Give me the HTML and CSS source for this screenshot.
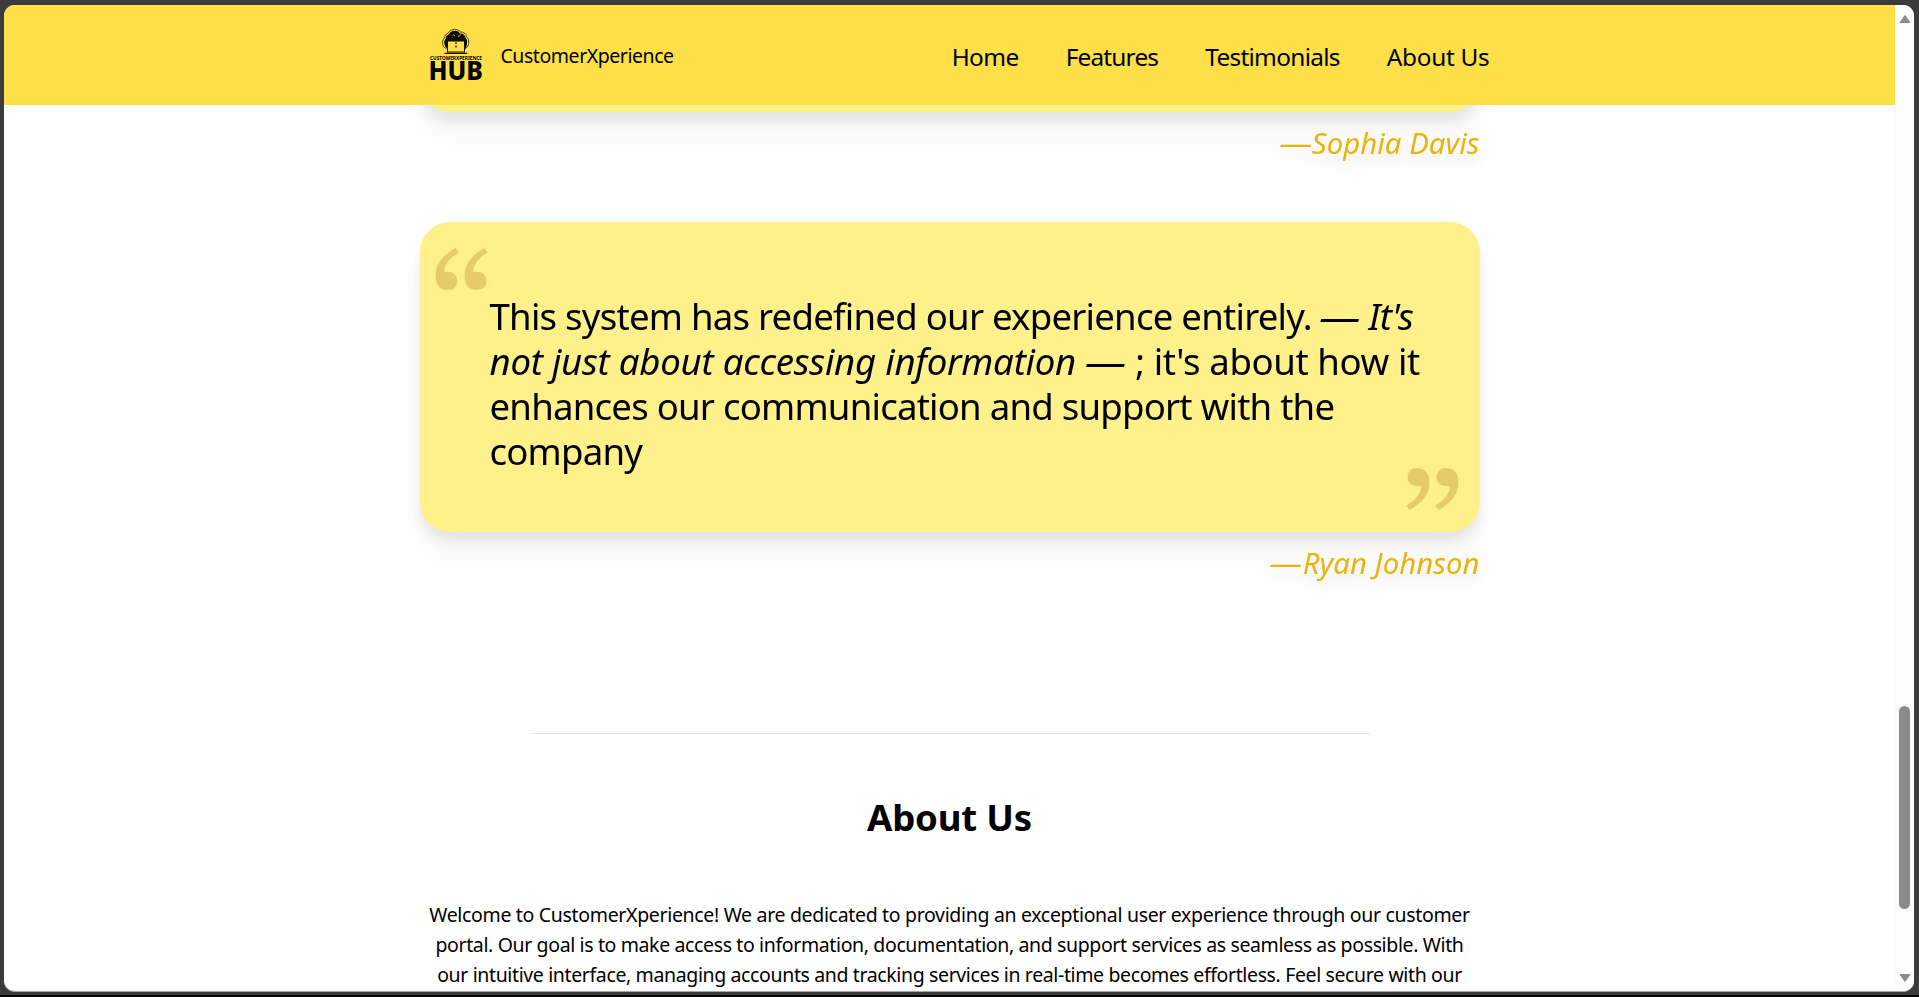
FILE: index.html
```html
<!DOCTYPE html>
<html lang="en">
<head>
<meta charset="utf-8">
<title>CustomerXperience</title>
<link rel="stylesheet" href="styles.css">
</head>
<body>
<div class="window">
  <div class="page">
    <header class="header">
      <div class="header-inner">
        <div class="brand">
          <svg class="logo" width="52" height="52" viewBox="0 0 52 52">
            <path d="M16.500 19.800A6.500 6.500 0 0 1 14 9.500Q14.500 5.500 18 4Q20.500 .3 24.500 .3Q28.500 .4 30.700 3Q35.500 3 36.500 7.500Q39.500 10 38.800 14.500Q38 18.500 35 19.800" fill="none" stroke="#2a2508" stroke-width=".8"/>
            <path d="M17 19.500Q12 14 15.500 10Q15.500 6.500 19 5Q21 1.600 25 1.700Q28.800 2 29.900 4.500Q34.500 4.200 35.500 8.600Q39 13 35.500 19.500Z" fill="#0b0900"/>
            <path d="M22.500 6.200Q24 5.200 25 7M28 7.500Q30 7.500 30.500 5.500" fill="none" stroke="#fde047" stroke-width=".8"/>
            <rect x="17.500" y="12" width="17" height="11" fill="#fde047" stroke="#141003" stroke-width="1"/>
            <path d="M26 13.200v1.700M26 16.500v2" stroke="#141003" stroke-width="1.300"/>
            <path d="M14.700 24.400H37.300" stroke="#141003" stroke-width="1.300"/>
            <text class="logo-small" x="0" y="30.600" textLength="52" lengthAdjust="spacingAndGlyphs">CUSTOMERXPERIENCE</text>
            <text class="logo-hub" x="-1.500" y="50.800" textLength="54.500" lengthAdjust="spacingAndGlyphs">HUB</text>
          </svg>
          <span class="brand-name">CustomerXperience</span>
        </div>
        <nav class="nav">
          <a class="home">Home</a>
          <a class="features">Features</a>
          <a class="testimonials">Testimonials</a>
          <a class="about-link">About Us</a>
        </nav>
      </div>
    </header>
    <main class="main">
      <figure class="quote quote-first">
        <blockquote class="card"></blockquote>
        <figcaption class="cite"><span class="dash">—</span>Sophia Davis</figcaption>
      </figure>
      <figure class="quote">
        <blockquote class="card">
          <svg class="mark mark-open" width="53" height="42" viewBox="0 0 53 42"><path id="q" d="M20.500 0L23.700 4.500Q9.500 12.500 8.800 24Q22 22.500 22.500 33Q22 42 12.500 42Q.8 42 .6 27Q.4 11.500 20.500 0Z"/><use href="#q" x="29"/></svg>
          <span class="line l1">This system has redefined our experience entirely. <em><span class="dash">—</span> It's</em></span>
          <span class="line l2"><em>not just about accessing information <span class="dash">—</span></em> ; it's about how it</span>
          <span class="line l3">enhances our communication and support with the</span>
          <span class="line l4">company</span>
          <svg class="mark mark-close" width="53" height="42" viewBox="0 0 53 42"><use href="#q"/><use href="#q" x="29"/></svg>
        </blockquote>
        <figcaption class="cite"><span class="dash">—</span>Ryan Johnson</figcaption>
      </figure>
      <hr class="rule">
      <section class="about">
        <h2 class="title">About Us</h2>
        <p class="copy">
          <span class="line p1">Welcome to CustomerXperience! We are dedicated to providing an exceptional user experience through our customer</span>
          <span class="line p2">portal. Our goal is to make access to information, documentation, and support services as seamless as possible. With</span>
          <span class="line p3">our intuitive interface, managing accounts and tracking services in real-time becomes effortless. Feel secure with our</span>
        </p>
      </section>
    </main>
  </div>
  <div class="scrollbar">
    <svg width="12" height="10" viewBox="0 0 12 10"><path d="M6 1.500L11 8.500H1Z" fill="#8b8b8b" stroke="#8b8b8b" stroke-linejoin="round"/></svg>
    <div class="thumb"></div>
    <svg width="12" height="10" viewBox="0 0 12 10"><path d="M6 8.500L11 1.500H1Z" fill="#8b8b8b" stroke="#8b8b8b" stroke-linejoin="round"/></svg>
  </div>
</div>
</body>
</html>
```
FILE: styles.css
```css
* { box-sizing: border-box; }
html { height: 100%; overflow: hidden; }
body {
  margin: 0;
  height: 997px;
  padding: 5px 5px 4px 4px;
  background: #3b3b3b;
  border-bottom: 2px solid #000;
  overflow: hidden;
  font-family: "Noto Sans", "Segoe UI", sans-serif;
  color: #000;
}
.window {
  display: flex;
  height: 987px;
  border-radius: 11px;
  overflow: hidden;
  background: #fff;
  border-bottom: 1px solid #a3a8a6;
}
.page { flex: 1; overflow: hidden; }
.header {
  position: relative;
  z-index: 2;
  height: 100px;
  background: #fde047;
}
.header-inner {
  width: 1060px;
  height: 100%;
  margin: 0 auto;
  padding-left: 10px;
  display: flex;
  align-items: center;
  justify-content: space-between;
}
.brand { display: flex; align-items: center; gap: 18px; }
.logo { overflow: visible; }
.logo-small { font-size: 4.8px; font-weight: 700; }
.logo-hub { font-size: 26px; font-weight: 800; }
.brand-name { padding: 2px 0 0 1px; font-size: 19.5px; line-height: 30px; letter-spacing: -.45px; }
.nav {
  display: flex;
  gap: 47px;
  margin-right: -10px;
  padding-top: 3px;
  font-size: 24.4px;
  line-height: 35px;
}
.home { letter-spacing: -.6px; }
.features { letter-spacing: -.8px; }
.testimonials { letter-spacing: -.7px; }
.about-link { letter-spacing: -.3px; }
.main { width: 1060px; margin: 0 auto; }
.quote { margin: 0; padding-bottom: 56px; filter: drop-shadow(0 25px 16px rgb(0 0 0 / .03)) drop-shadow(0 10px 6px rgb(0 0 0 / .08)); }
.quote-first { margin-top: -303px; }
.card {
  position: relative;
  height: 310px;
  margin: 0;
  padding: 72px 50px 0 70px;
  border-radius: 30px;
  background: #fef08a;
  font-size: 36.6px;
  line-height: 45px;
}
.line { display: block; white-space: nowrap; }
.dash { display: inline-block; transform: scaleX(1.17); transform-origin: right; }
.mark { position: absolute; fill: #e5cc68; }
.mark-open { left: 15px; top: 26px; }
.mark-close { right: 21px; bottom: 22px; transform: rotate(180deg); }
.cite {
  margin-top: 9px;
  text-align: right;
  font-size: 29.3px;
  line-height: 45px;
  font-style: italic;
  letter-spacing: .05px;
  color: #eab308;
}
.l1 { letter-spacing: -.77px; }
.l1 em { margin-left: 5px; }
.l2 { letter-spacing: -.4px; }
.l2 em { letter-spacing: -.25px; }
.l2 .dash { margin-left: 6px; }
.l3 { letter-spacing: -.78px; }
.l4 { letter-spacing: -.8px; }
.rule { width: 840px; height: 1px; margin: 91px auto 0; border: 0; background: #e5e7eb; }
.about { text-align: center; }
.title { margin: 61px 0 0; font-size: 36.6px; line-height: 45px; font-weight: 700; letter-spacing: -.2px; }
.copy { margin: 60px 0 0; font-size: 19.5px; line-height: 30px; }
.p1 { letter-spacing: -.325px; }
.p2 { letter-spacing: -.37px; }
.p3 { letter-spacing: -.37px; }
.scrollbar {
  width: 19px;
  padding: 9px 0 8px;
  display: flex;
  flex-direction: column;
  align-items: center;
  background: #fcfcfc;
}
.thumb { width: 11px; height: 203px; margin: 682px 0 auto; border-radius: 6px; background: #8b8b8b; }
```
